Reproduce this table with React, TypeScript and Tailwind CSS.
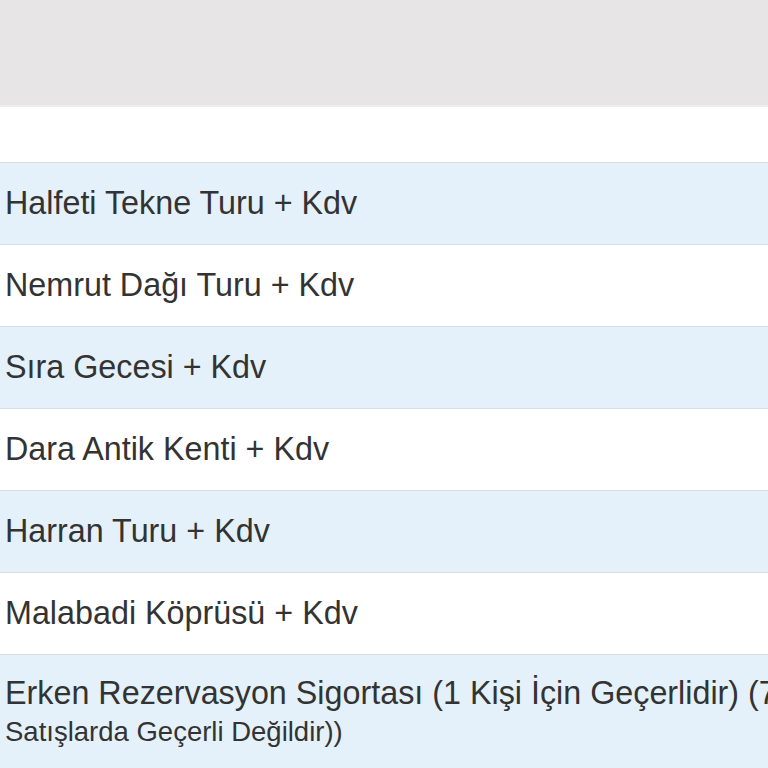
import React from "react";

const rows = [
  "Halfeti Tekne Turu + Kdv",
  "Nemrut Dağı Turu + Kdv",
  "Sıra Gecesi + Kdv",
  "Dara Antik Kenti + Kdv",
  "Harran Turu + Kdv",
  "Malabadi Köprüsü + Kdv",
];

export default function App() {
  return (
    <div
      className="w-[768px] h-[768px] overflow-hidden bg-white text-[#333333]"
      style={{ fontFamily: '"Liberation Sans", Arial, sans-serif' }}
    >
      <div className="h-[105px] bg-[#e7e5e5]" />
      <div className="h-[2px] bg-[#efeeee]" />
      <div className="h-[55px] bg-white" />
      <div className="w-[1100px]">
        {rows.map((r, i) => (
          <div
            key={r}
            className={`h-[82px] border-t border-[#d9dfe3] pl-[5px] pt-[22px] text-[32.3px] leading-[36px] whitespace-nowrap ${
              i % 2 === 0 ? "bg-[#e4f1fa]" : "bg-white"
            }`}
          >
            {r}
          </div>
        ))}
        <div className="h-[130px] border-t border-[#d9dfe3] bg-[#e4f1fa] pl-[5px] pt-[20px]">
          <div className="text-[32.3px] leading-[36px] whitespace-nowrap">
            Erken Rezervasyon Sigortası (1 Kişi İçin Geçerlidir) (7 Gün Kala Yapılan
          </div>
          <div className="text-[27.5px] leading-[41px] whitespace-nowrap">
            Satışlarda Geçerli Değildir))
          </div>
        </div>
      </div>
    </div>
  );
}
